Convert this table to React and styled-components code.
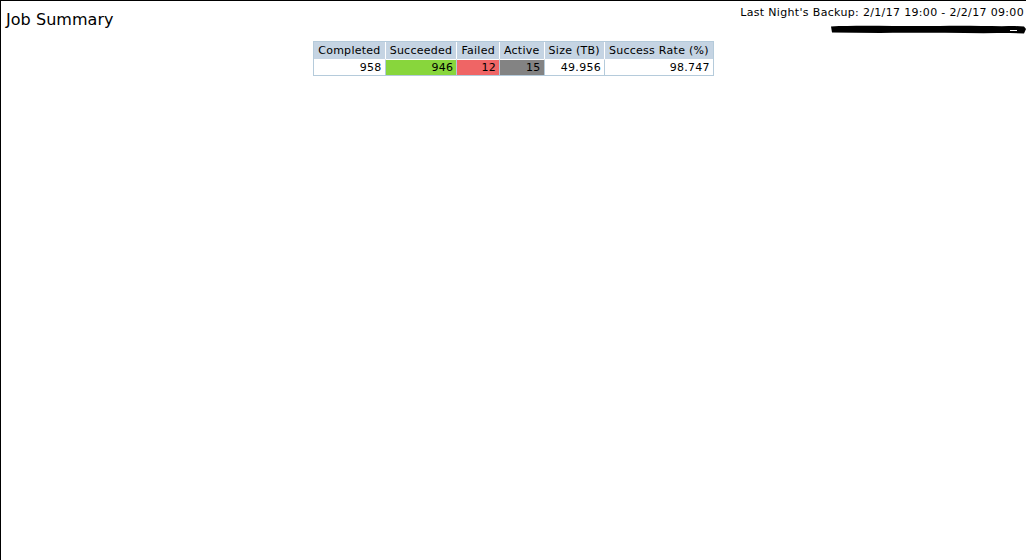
import styled, { createGlobalStyle } from "styled-components"

const GlobalStyle = createGlobalStyle`
    html, body {
        margin: 0;
        padding: 0;
        background: #fff;
    }
    body {
        font-family: "DejaVu Sans", Verdana, sans-serif;
        color: #000;
    }
`

const jobs = [
    { label: "Completed", value: "958", tone: "plain" },
    { label: "Succeeded", value: "946", tone: "good" },
    { label: "Failed", value: "12", tone: "bad" },
    { label: "Active", value: "15", tone: "busy" },
    { label: "Size (TB)", value: "49.956", tone: "plain" },
    { label: "Success Rate (%)", value: "98.747", tone: "plain" },
]

const tones = {
    plain: "#ffffff",
    good: "#88d63c",
    bad: "#ef6565",
    busy: "#838383",
}

export default function App() {
    return (
        <>
            <GlobalStyle />
            <Frame>
                <TopBar>
                    <Title>Job Summary</Title>
                    <Info>
                        <span>Last Night's Backup: 2/1/17 19:00 - 2/2/17 09:00</span>
                        <Scribble viewBox="0 0 196 10" aria-hidden="true">
                            <path
                                d="M1 2.5 C 30 1, 70 2.5, 110 2 C 140 1.5, 165 2.5, 185 2 L 194 2.5 L 196 5 L 194 9.5 L 180 9 C 140 9.5, 90 8.5, 50 9 L 2 8.5 Z"
                                fill="#000"
                            />
                            <path d="M180 6.5 L 187 6.5" stroke="#fff" strokeWidth="1" />
                        </Scribble>
                    </Info>
                </TopBar>

                <SummaryTable>
                    <thead>
                        <tr>
                            {jobs.map(job => (
                                <HeadCell key={job.label}>{job.label}</HeadCell>
                            ))}
                        </tr>
                    </thead>
                    <tbody>
                        <tr>
                            {jobs.map(job => (
                                <ValueCell key={job.label} tone={job.tone}>{job.value}</ValueCell>
                            ))}
                        </tr>
                    </tbody>
                </SummaryTable>
            </Frame>
        </>
    )
}

const Frame = styled.div`
    box-sizing: border-box;
    height: 560px;
    border-top: 1px solid #000;
    border-left: 1px solid #000;
`

const TopBar = styled.header`
    display: flex;
    justify-content: space-between;
    align-items: flex-start;
    padding: 0 2px 0 5px;
    height: 40px;
`

const Title = styled.h1`
    margin: 9px 0 0;
    font-size: 16px;
    font-weight: normal;
    letter-spacing: 0.05px;
`

const Info = styled.div`
    display: flex;
    flex-direction: column;
    align-items: flex-end;
    margin-top: 5px;
    font-size: 11px;
    line-height: 14px;
    letter-spacing: 0.33px;
`

const Scribble = styled.svg`
    width: 196px;
    height: 10px;
    margin-top: 4px;
    margin-right: -2px;
`

const SummaryTable = styled.table`
    margin: 0 auto;
    border-collapse: separate;
    border-spacing: 0;
    border: 1px solid #b5cbdb;
    font-size: 11px;
    line-height: 15px;
    letter-spacing: 0.27px;
`

const HeadCell = styled.th`
    background: #c5d4e3;
    font-weight: normal;
    padding: 1px 4px 1px;
    border-right: 1px solid #fff;
    white-space: nowrap;

    &:last-child {
        border-right: none;
    }
`

const ValueCell = styled.td`
    background: ${props => tones[props.tone]};
    text-align: right;
    padding: 0 3px 0 4px;
    border-top: 1px solid #fff;
    border-right: 1px solid #b5cbdb;

    &:last-child {
        border-right: none;
    }
`
